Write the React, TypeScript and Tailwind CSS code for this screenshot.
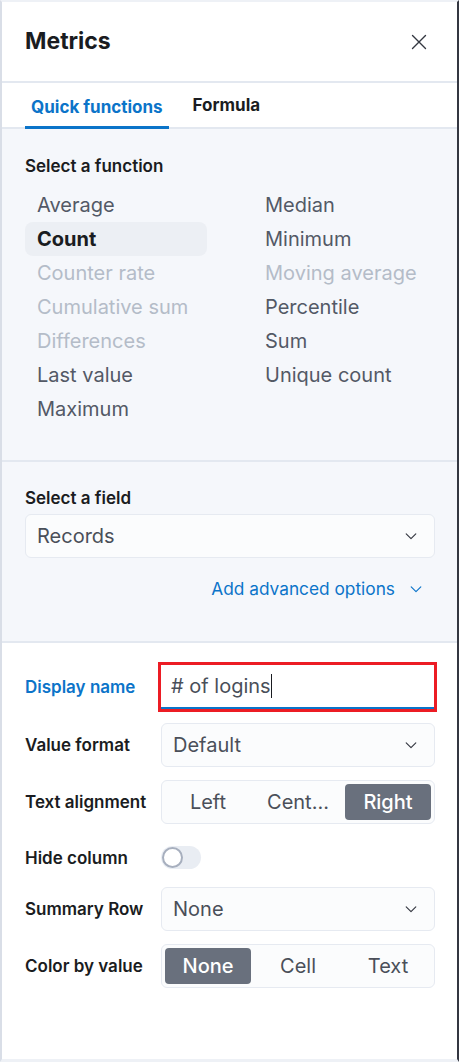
import React from 'react'

const leftFns = [
  { name: 'Average', state: 'normal' },
  { name: 'Count', state: 'selected' },
  { name: 'Counter rate', state: 'disabled' },
  { name: 'Cumulative sum', state: 'disabled' },
  { name: 'Differences', state: 'disabled' },
  { name: 'Last value', state: 'normal' },
  { name: 'Maximum', state: 'normal' },
]

const rightFns = [
  { name: 'Median', state: 'normal' },
  { name: 'Minimum', state: 'normal' },
  { name: 'Moving average', state: 'disabled' },
  { name: 'Percentile', state: 'normal' },
  { name: 'Sum', state: 'normal' },
  { name: 'Unique count', state: 'normal' },
]

const Chevron = ({ color = '#343741' }: { color?: string }) => (
  <svg width="14" height="14" viewBox="0 0 16 16" fill="none">
    <path d="M2.5 5.5L8 11l5.5-5.5" stroke={color} strokeWidth="1.3" strokeLinecap="round" strokeLinejoin="round" />
  </svg>
)

const FnItem = ({ name, state }: { name: string; state: string }) => {
  const cls =
    state === 'selected'
      ? 'bg-[#eceff4] font-bold text-[#1a1c21]'
      : state === 'disabled'
      ? 'text-[#b4bcc8]'
      : 'text-[#535966]'
  return (
    <div className={`h-[34px] flex items-center px-3 rounded-lg text-[20px] ${cls}`}>{name}</div>
  )
}

const Select = ({ value }: { value: string }) => (
  <div className="h-[44px] flex items-center justify-between pl-[11px] pr-4 bg-[#fbfcfd] border border-[#e6eaf1] rounded-md text-[20px] text-[#4a4f59]">
    <span>{value}</span>
    <Chevron />
  </div>
)

const ButtonGroup = ({ items, active }: { items: string[]; active: number }) => (
  <div className="h-[44px] grid grid-cols-3 gap-1 p-[3px] bg-[#fbfcfd] border border-[#e6eaf1] rounded-md">
    {items.map((it, i) => (
      <div
        key={it}
        className={`flex items-center justify-center rounded-[4px] text-[20px] ${
          i === active ? 'bg-[#69707d] text-white font-medium' : 'text-[#4a4f59]'
        }`}
      >
        {it}
      </div>
    ))}
  </div>
)

const Row = ({ label, blue, children, className = '' }: { label: string; blue?: boolean; children: React.ReactNode; className?: string }) => (
  <div className={`flex items-center ${className}`}>
    <div className={`w-[136px] text-[17px] font-semibold leading-5 ${blue ? 'text-[#0b74c9]' : 'text-[#1a1c21]'}`}>{label}</div>
    <div className="flex-1">{children}</div>
  </div>
)

const App = () => {
  return (
    <div className="w-[459px] h-[1062px] bg-white font-['Inter',sans-serif] flex flex-col border-t-2 border-t-[#eef1f6] border-l-2 border-l-[#d9dee7] border-r-2 border-r-[#343741] border-b-[3px] border-b-[#eef1f6] overflow-hidden">
      {/* header */}
      <div className="h-[81px] flex items-center justify-between pl-[23px] pr-[30px] border-b-2 border-[#e3e8f0] shrink-0">
        <h2 className="text-[23px] font-bold text-[#1a1c21]">Metrics</h2>
        <svg width="16" height="16" viewBox="0 0 16 16" fill="none">
          <path d="M1.5 1.5l13 13M14.5 1.5l-13 13" stroke="#343741" strokeWidth="1.4" strokeLinecap="round" />
        </svg>
      </div>

      {/* tabs */}
      <div className="h-[46px] flex items-end gap-6 pl-[23px] border-b-2 border-[#e3e8f0] shrink-0">
        <div className="h-full flex items-center pt-[4px] px-[6px] border-b-[3px] border-[#0b74c9] -mb-[2px] text-[17px] font-bold text-[#0b74c9]">
          Quick functions
        </div>
        <div className="h-full flex items-center pt-[2px] text-[17px] font-bold text-[#1a1c21]">Formula</div>
      </div>

      {/* function section */}
      <div className="bg-[#f5f7fb] pt-[27px] pb-[34px] pl-[23px] pr-[22px] border-b-2 border-[#e3e8f0] shrink-0">
        <div className="text-[17px] font-semibold text-[#1a1c21] leading-5">Select a function</div>
        <div className="grid grid-cols-[182px_1fr] gap-x-[46px] mt-[12px]">
          <div className="flex flex-col">
            {leftFns.map((f) => (
              <FnItem key={f.name} {...f} />
            ))}
          </div>
          <div className="flex flex-col">
            {rightFns.map((f) => (
              <FnItem key={f.name} {...f} />
            ))}
          </div>
        </div>
      </div>

      {/* field section */}
      <div className="bg-[#f5f7fb] pt-[26px] pb-[40px] pl-[23px] pr-[22px] border-b-2 border-[#e3e8f0] shrink-0">
        <div className="text-[17px] font-semibold text-[#1a1c21] leading-5">Select a field</div>
        <div className="mt-[6px]">
          <Select value="Records" />
        </div>
        <div className="mt-[19px] flex items-center justify-end gap-[14px] pr-[12px] text-[17.3px] text-[#0b74c9] leading-6">
          <span>Add advanced options</span>
          <Chevron color="#0b74c9" />
        </div>
      </div>

      {/* display options */}
      <div className="flex flex-col pt-[19px] pl-[23px] pr-[22px]">
        <Row label="Display name" blue>
          <div className="border-[3px] border-[#ec1c24] -ml-[3px] -mr-[2px]">
            <div className="h-[44px] flex items-center px-[10px] bg-white border-b-2 border-[#0b74c9] text-[20px] text-[#4a4f59]">
              <span># of logins</span>
              <span className="w-px h-[24px] bg-[#1a1c21]" />
            </div>
          </div>
        </Row>
        <Row label="Value format" className="mt-[11px]">
          <Select value="Default" />
        </Row>
        <Row label="Text alignment" className="mt-[13px]">
          <ButtonGroup items={['Left', 'Cent...', 'Right']} active={2} />
        </Row>
        <Row label="Hide column" className="mt-[22px]">
          <div className="w-[40px] h-[23px] rounded-full bg-[#e9edf3] flex items-center pl-[1px]">
            <div className="w-[21px] h-[21px] rounded-full bg-white border-2 border-[#a7afbe]" />
          </div>
        </Row>
        <Row label="Summary Row" className="mt-[18px]">
          <Select value="None" />
        </Row>
        <Row label="Color by value" className="mt-[13px]">
          <ButtonGroup items={['None', 'Cell', 'Text']} active={0} />
        </Row>
      </div>
    </div>
  )
}

export default App
